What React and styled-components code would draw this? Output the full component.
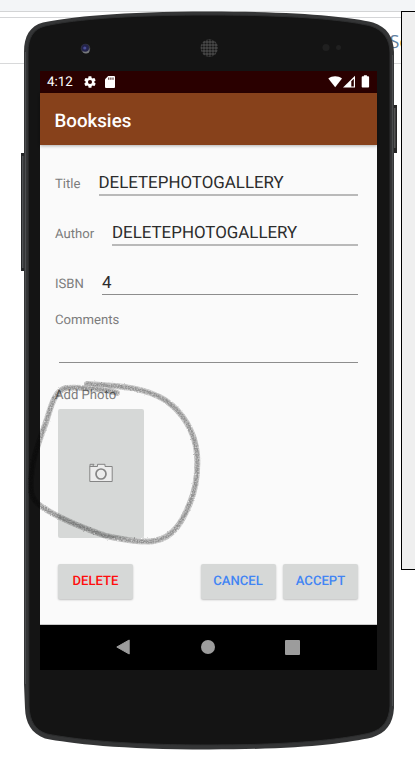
import React from 'react';
import styled, { createGlobalStyle } from 'styled-components';

const GlobalStyle = createGlobalStyle`
  * { box-sizing: border-box; }
  body { margin: 0; background: #fff; font-family: Roboto, sans-serif; overflow: hidden; text-rendering: geometricPrecision; }
`;

const Desktop = styled.div`
  position: relative;
  width: 415px;
  height: 775px;
  overflow: hidden;
  background: #fff;
`;

const TabStrip = styled.div`
  height: 12px;
  background: #f3f5f7;
  border-bottom: 1px solid #d3d4d5;
`;

const Toolbar = styled.div`
  height: 52px;
  border-bottom: 1px solid #d8d9da;
  padding-top: 5px;
`;

const ToolbarInner = styled.div`
  height: 46px;
  border-top: 1px solid #d5d6d8;
  display: flex;
  justify-content: flex-end;
  align-items: center;
`;

const SearchHint = styled.span`
  width: 25.5px;
  font: 18px/24px 'Open Sans', sans-serif;
  color: #5f7f9f;
  padding-top: 2px;
`;

const HintTail = styled.span`
  color: #b8742c;
`;

const SidePanel = styled.div`
  position: absolute;
  left: 401px;
  top: 11px;
  width: 30px;
  height: 559px;
  background: #efefef;
  border: 1px solid #000;
`;

const Phone = styled.div`
  position: absolute;
  left: 20px;
  top: 10px;
  width: 380px;
  height: 742px;
  padding: 61px 23px 82px 20px;
`;

const Shell = styled.svg`
  position: absolute;
  left: 0;
  top: 0;
`;

const Screen = styled.div`
  position: relative;
  height: 599px;
  display: flex;
  flex-direction: column;
  background: #fafafa;
`;

const StatusBar = styled.div`
  height: 22px;
  flex: none;
  background: #2a0000;
  color: #fff;
  display: flex;
  align-items: center;
  justify-content: space-between;
  padding: 0 5px 0 7px;
`;

const StatusGroup = styled.div`
  display: flex;
  align-items: center;
`;

const Clock = styled.span`
  font-size: 13.4px;
  line-height: 22px;
  width: 35.5px;
  padding-top: 2px;
`;

const AppBar = styled.header`
  height: 52px;
  flex: none;
  background: #87411b;
  color: #fff;
  font-size: 18.7px;
  font-weight: 500;
  line-height: 56px;
  padding-left: 14.5px;
  box-shadow: 0 1px 3px rgba(0, 0, 0, 0.3);
`;

const Form = styled.main`
  flex: 1;
  padding: 12px 19px 0 15px;
  border-bottom: 1px solid #c9c9c9;
`;

const FieldRow = styled.div`
  display: flex;
  height: 50px;
`;

const Label = styled.label`
  display: block;
  font-size: 13.1px;
  line-height: 16px;
  color: #7c7c7c;
  width: ${(p) => p.$width || 'auto'};
  padding-top: ${(p) => p.$top || '20px'};
  flex: none;
`;

const Value = styled.div`
  flex: 1;
  height: ${(p) => p.$height || '39px'};
  border-bottom: ${(p) => p.$line || '2px solid #b9b9b9'};
  font-size: 16.9px;
  line-height: 20px;
  padding-top: 16px;
  color: #2c2c2c;
  white-space: nowrap;
`;

const CommentLine = styled.div`
  height: 34px;
  margin-left: 3.5px;
  border-bottom: 1px solid #8d8d8d;
`;

const PhotoButton = styled.button`
  display: flex;
  align-items: center;
  justify-content: center;
  width: 86px;
  height: 129px;
  margin: 5px 0 0 3.4px;
  padding: 0 0 1px;
  border: 0;
  border-radius: 2px;
  background: #d6d8d7;
`;

const Actions = styled.div`
  display: flex;
  gap: 7.5px;
  margin: 26px 0 0 3px;
`;

const ActionButton = styled.button`
  width: 75px;
  height: 35px;
  padding: 1px 0 0;
  border: 0;
  border-radius: 2px;
  background: #d6d8d7;
  box-shadow: 0 1px 2px rgba(0, 0, 0, 0.24);
  font: 500 13.1px/34px Roboto, sans-serif;
  text-rendering: geometricPrecision;
  color: ${(p) => (p.$danger ? '#ff0d0d' : '#4285f4')};
  margin-right: ${(p) => (p.$danger ? 'auto' : '0')};
`;

const NavBar = styled.nav`
  height: 45px;
  flex: none;
  background: #000;
  display: flex;
  align-items: center;
  justify-content: space-between;
  padding: 0 77px 1px 76px;
`;

const Scribble = styled.svg`
  position: absolute;
  left: 0;
  top: 370px;
  pointer-events: none;
`;

const OUTLINE =
  'M24 52 C24 36 30 26 43 22.5 C70 17 120 11.5 209 11.5 C298 11.5 348 16.5 373 22.5 C387 27 393.5 37 394 52 L394 708 C393 724 386 733 372 737.5 C345 743.5 298 749.5 209 749.5 C120 749.5 70 743.5 45 738.5 C31 733 25.5 723 25 708 L24 684 Z';
const FACE =
  'M28 53 C28 38 33 29 45 26 C72 20 122 15 209 15 C296 15 346 20 371 26 C383 30 390 39 390 53 L390 706 C389 721 383 729 370 733 C344 739 297 745 209 745 C121 745 73 739 47 734 C35 730 29.5 721 29 706 Z';

function PhoneShell() {
  return (
    <Shell width="380" height="742" viewBox="20 10 380 742">
      <defs>
        <pattern id="mesh" width="3" height="3" patternUnits="userSpaceOnUse">
          <rect width="3" height="3" fill="#484848" />
          <circle cx="1.5" cy="1.5" r="1.1" fill="#171717" />
        </pattern>
      </defs>
      <rect x="21" y="153" width="4" height="118" fill="#242628" />
      <rect x="22" y="156" width="1.5" height="112" fill="#505254" />
      <rect x="392" y="105" width="5" height="48" fill="#252525" />
      <rect x="394" y="108" width="1.5" height="40" fill="#555" />
      <path d={OUTLINE} fill="#343536" />
      <path d={FACE} fill="#141414" stroke="#2c2d2e" strokeWidth="1" />
      <path d="M25.5 52V684M392.5 55V706" stroke="#4b4d4f" fill="none" />
      <circle cx="85.5" cy="48.5" r="4.8" fill="#35363a" />
      <circle cx="86" cy="50" r="3.6" fill="#77797c" />
      <circle cx="85.2" cy="48" r="3.8" fill="#23234b" />
      <circle cx="84.8" cy="48" r="1.6" fill="#4a4e98" />
      <circle cx="209.3" cy="48" r="8.7" fill="url(#mesh)" />
      <circle cx="326" cy="47.5" r="3.5" fill="#202020" />
      <circle cx="338.5" cy="47.5" r="2.5" fill="#202020" />
    </Shell>
  );
}

function GearIcon() {
  return (
    <svg width="14" height="14" viewBox="0 0 24 24" fill="#fff">
      <path d="M19.4 13c0-.3.1-.6.1-1s0-.7-.1-1l2.1-1.6c.2-.2.2-.4.1-.6l-2-3.5c-.1-.2-.4-.3-.6-.2l-2.5 1c-.5-.4-1.1-.7-1.7-1l-.4-2.6c0-.3-.2-.5-.5-.5h-4c-.3 0-.5.2-.5.4L9 5.1c-.6.3-1.2.6-1.7 1L4.9 5.1c-.2-.1-.5 0-.6.2l-2 3.5c-.1.2-.1.4.1.6L4.5 11c0 .3-.1.7-.1 1s0 .7.1 1l-2.1 1.6c-.2.2-.2.4-.1.6l2 3.5c.1.2.4.3.6.2l2.5-1c.5.4 1.1.7 1.7 1l.4 2.6c0 .3.2.5.5.5h4c.3 0 .5-.2.5-.4l.4-2.7c.6-.3 1.2-.6 1.7-1l2.5 1c.2.1.5 0 .6-.2l2-3.5c.1-.2.1-.4-.1-.6L19.4 13zM12 15.5A3.5 3.5 0 1 1 12 8.5a3.5 3.5 0 0 1 0 7z" />
    </svg>
  );
}

const SdSvg = styled.svg`
  margin-left: 8.5px;
`;

function SdIcon() {
  return (
    <SdSvg width="10" height="12" viewBox="0 0 10 12">
      <path d="M3.2 0H9a1 1 0 0 1 1 1v10a1 1 0 0 1-1 1H1a1 1 0 0 1-1-1V3.3z" fill="#fff" />
      <path d="M3.8 1.5v2.3M5.9 1.5v2.3M8 1.5v2.3" stroke="#2a0000" strokeWidth=".9" />
    </SdSvg>
  );
}

function SignalIcons() {
  return (
    <svg width="44" height="14" viewBox="0 0 44 14">
      <path d="M.3 3.6C4.2.5 10.1.5 14 3.6L7.2 12.3z" fill="#fff" />
      <path d="M15 12.5L27 .8V12.5z" fill="#fff" />
      <path d="M23.3 6.3L25.8 3.8V11.5H23.3z" fill="#2a0000" />
      <path d="M33.7 2.3q0-1 1-1h1.2V.2h3v1.1h1.2q1 0 1 1v9.5q0 .7-.8.7h-5.8q-.8 0-.8-.7z" fill="#fff" />
    </svg>
  );
}

function CameraIcon() {
  return (
    <svg width="24" height="20" viewBox="0 0 24 20" fill="none" stroke="#858585">
      <path d="M.8 3.5V18.5H23.2V3.5H16V1.3H8.5V3.5z" fill="#ececec" />
      <path d="M1 4V1.3H5L3.5 3.5" />
      <circle cx="12" cy="11" r="5" strokeWidth="1.7" />
    </svg>
  );
}

function PencilCircle() {
  const d =
    'M117 393C105 389 80 387 66 388C55 391 52 403 47 419C42 435 34 451 32 470C29 491 31 500 42 507C57 517 86 529 106 536C125 540 143 543 154 541C174 538 183 520 190 503C197 486 198 469 197 454C195 432 183 412 165 400C147 389 127 386 87 384';
  return (
    <Scribble width="205" height="185" viewBox="0 370 205 185">
      <defs>
        <filter id="grain" x="-5%" y="-5%" width="110%" height="110%">
          <feTurbulence type="fractalNoise" baseFrequency=".7" numOctaves="2" seed="4" result="n" />
          <feDisplacementMap in="SourceGraphic" in2="n" scale="2" xChannelSelector="R" yChannelSelector="G" result="rough" />
          <feColorMatrix in="n" type="matrix" values="0 0 0 0 0  0 0 0 0 0  0 0 0 0 0  1.2 0 0 0 .25" result="dots" />
          <feComposite in="rough" in2="dots" operator="in" result="pencil" />
          <feGaussianBlur in="pencil" stdDeviation=".6" />
        </filter>
      </defs>
      <g filter="url(#grain)" fill="none" stroke="#000" strokeLinecap="round">
        <path d={d} strokeWidth="6" opacity=".26" />
        <path d={d} strokeWidth="3.5" opacity=".22" />
      </g>
    </Scribble>
  );
}

export default function App() {
  return (
    <Desktop>
      <GlobalStyle />
      <TabStrip />
      <Toolbar>
        <ToolbarInner>
          <SearchHint>S<HintTail>e</HintTail></SearchHint>
        </ToolbarInner>
      </Toolbar>
      <SidePanel />
      <Phone>
        <PhoneShell />
        <Screen>
          <StatusBar>
            <StatusGroup>
              <Clock>4:12</Clock>
              <GearIcon />
              <SdIcon />
            </StatusGroup>
            <SignalIcons />
          </StatusBar>
          <AppBar>Booksies</AppBar>
          <Form>
            <FieldRow>
              <Label $width="43.5px">Title</Label>
              <Value>DELETEPHOTOGALLERY</Value>
            </FieldRow>
            <FieldRow>
              <Label $width="57px">Author</Label>
              <Value>DELETEPHOTOGALLERY</Value>
            </FieldRow>
            <FieldRow>
              <Label $width="47px">ISBN</Label>
              <Value $height="38px" $line="1px solid #8d8d8d">4</Value>
            </FieldRow>
            <Label $top="6px">Comments</Label>
            <CommentLine />
            <Label $top="25px">Add Photo</Label>
            <PhotoButton aria-label="Add Photo">
              <CameraIcon />
            </PhotoButton>
            <Actions>
              <ActionButton $danger>DELETE</ActionButton>
              <ActionButton>CANCEL</ActionButton>
              <ActionButton>ACCEPT</ActionButton>
            </Actions>
          </Form>
          <NavBar>
            <svg width="14" height="16" viewBox="0 0 14 16"><path d="M13.2 1V15L.8 8z" fill="#9c9c9c" stroke="#9c9c9c" strokeLinejoin="round" /></svg>
            <svg width="14" height="14" viewBox="0 0 14 14"><circle cx="7" cy="7" r="7" fill="#9c9c9c" /></svg>
            <svg width="15" height="15" viewBox="0 0 15 15"><rect width="15" height="15" rx="1" fill="#9c9c9c" /></svg>
          </NavBar>
        </Screen>
      </Phone>
      <PencilCircle />
    </Desktop>
  );
}
